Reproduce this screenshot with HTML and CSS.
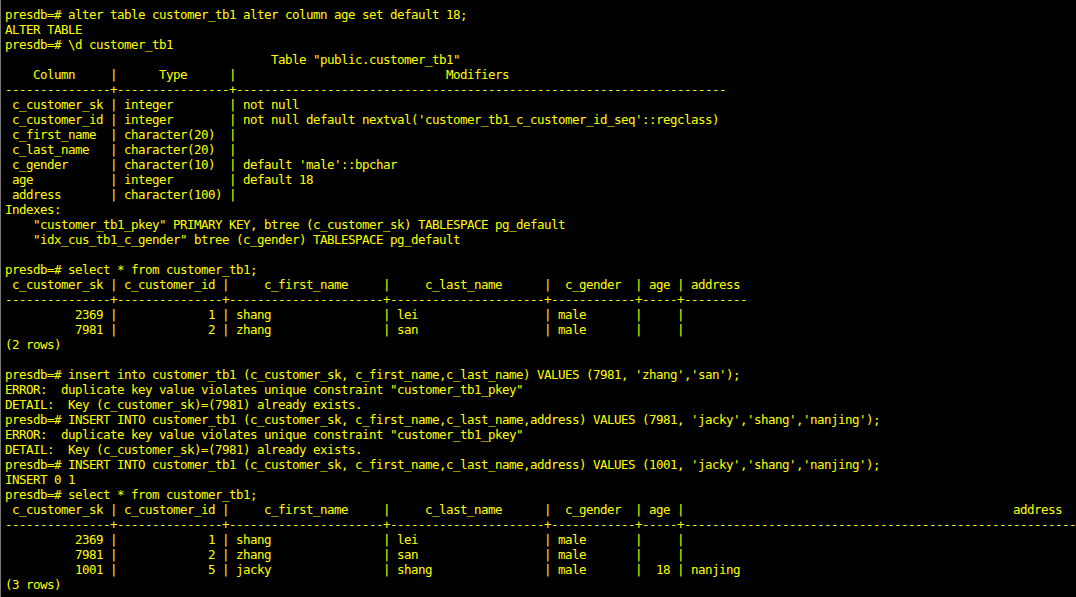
FILE: index.html
```html
<!DOCTYPE html>
<html lang="en">
<head>
<meta charset="utf-8">
<title>psql</title>
<link rel="stylesheet" href="styles.css">
</head>
<body>
<div class="console">
<pre class="term">presdb=# alter table customer_tb1 alter column age set default 18;
ALTER TABLE
presdb=# \d customer_tb1
                                      Table "public.customer_tb1"
    Column     |      Type      |                              Modifiers
---------------+----------------+----------------------------------------------------------------------
 c_customer_sk | integer        | not null
 c_customer_id | integer        | not null default nextval('customer_tb1_c_customer_id_seq'::regclass)
 c_first_name  | character(20)  |
 c_last_name   | character(20)  |
 c_gender      | character(10)  | default 'male'::bpchar
 age           | integer        | default 18
 address       | character(100) |
Indexes:
    "customer_tb1_pkey" PRIMARY KEY, btree (c_customer_sk) TABLESPACE pg_default
    "idx_cus_tb1_c_gender" btree (c_gender) TABLESPACE pg_default

presdb=# select * from customer_tb1;
 c_customer_sk | c_customer_id |     c_first_name     |     c_last_name      |  c_gender  | age | address
---------------+---------------+----------------------+----------------------+------------+-----+---------
          2369 |             1 | shang                | lei                  | male       |     |
          7981 |             2 | zhang                | san                  | male       |     |
(2 rows)

presdb=# insert into customer_tb1 (c_customer_sk, c_first_name,c_last_name) VALUES (7981, 'zhang','san');
ERROR:  duplicate key value violates unique constraint "customer_tb1_pkey"
DETAIL:  Key (c_customer_sk)=(7981) already exists.
presdb=# INSERT INTO customer_tb1 (c_customer_sk, c_first_name,c_last_name,address) VALUES (7981, 'jacky','shang','nanjing');
ERROR:  duplicate key value violates unique constraint "customer_tb1_pkey"
DETAIL:  Key (c_customer_sk)=(7981) already exists.
presdb=# INSERT INTO customer_tb1 (c_customer_sk, c_first_name,c_last_name,address) VALUES (1001, 'jacky','shang','nanjing');
INSERT 0 1
presdb=# select * from customer_tb1;
 c_customer_sk | c_customer_id |     c_first_name     |     c_last_name      |  c_gender  | age |                                               address
---------------+---------------+----------------------+----------------------+------------+-----+------------------------------------------------------------------------------------------------------
          2369 |             1 | shang                | lei                  | male       |     |
          7981 |             2 | zhang                | san                  | male       |     |
          1001 |             5 | jacky                | shang                | male       |  18 | nanjing
(3 rows)</pre>
</div>
</body>
</html>
```

FILE: styles.css
```css
html, body {
  margin: 0;
  padding: 0;
  background: #000000;
  width: 1076px;
  height: 597px;
  overflow: hidden;
}

.console {
  width: 1076px;
  height: 597px;
  box-sizing: border-box;
  border-left: 1px solid #7a7a7a;
  background: #000000;
  overflow: hidden;
  padding: 7px 0 0 4px;
}

.term {
  margin: 0;
  color: #ffff00;
  font-family: "DejaVu Sans Mono", "Liberation Mono", monospace;
  font-size: 12.5px;
  letter-spacing: -0.525px;
  line-height: 15px;
  white-space: pre;
}
```
